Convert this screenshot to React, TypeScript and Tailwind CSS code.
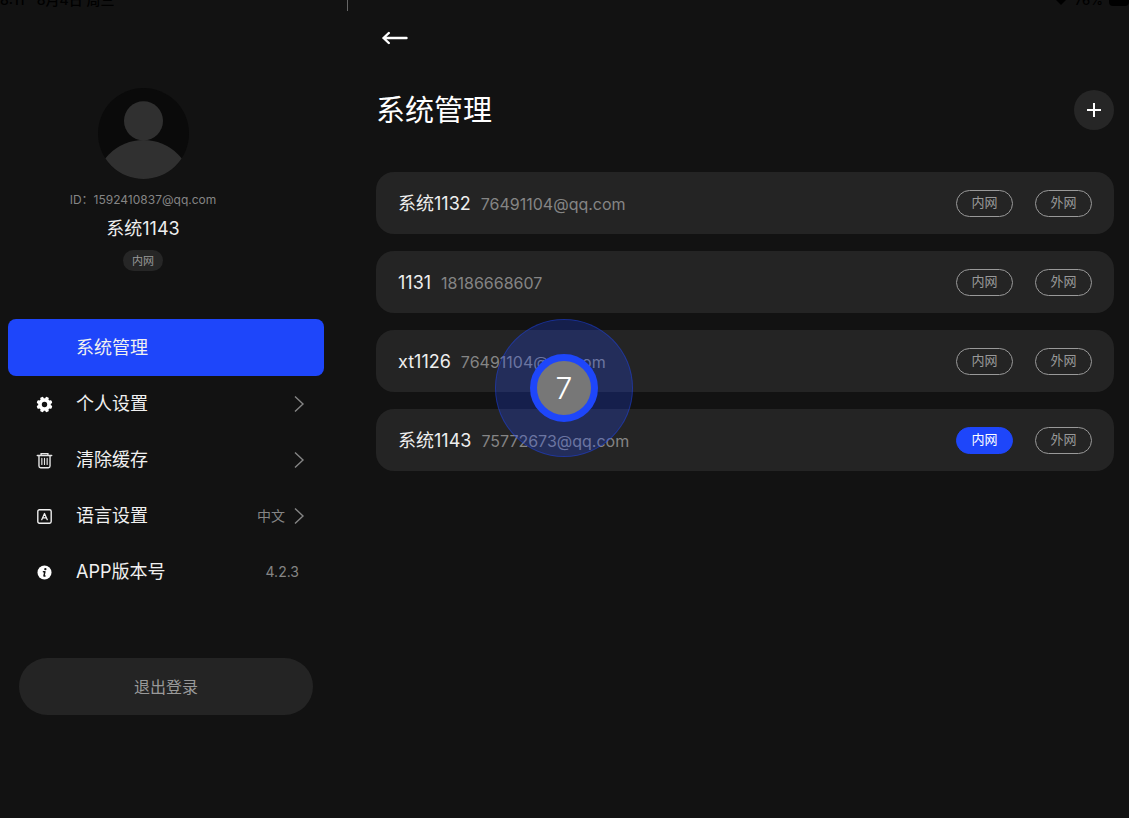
import React, { useState } from 'react';

type Network = 'inner' | 'outer';

interface Account {
  id: number;
  name: string;
  login: string;
  network: Network | null;
}

const ACCOUNTS: Account[] = [
  { id: 1, name: '系统1132', login: '76491104@qq.com', network: null },
  { id: 2, name: '1131', login: '18186668607', network: null },
  { id: 3, name: 'xt1126', login: '76491104@qq.com', network: null },
  { id: 4, name: '系统1143', login: '75772673@qq.com', network: 'inner' },
];

const GearIcon = () => (
  <svg width="17" height="17" viewBox="0 0 17 17" aria-hidden="true">
    <g fill="#fff" transform="translate(8.5 8.5)">
      <circle r="6.3" />
      {[22.5, 67.5, 112.5, 157.5].map((angle) => (
        <rect key={angle} x="-1.7" y="-7.9" width="3.4" height="15.8" rx="1" transform={`rotate(${angle})`} />
      ))}
      <circle r="2.7" fill="#121212" />
    </g>
  </svg>
);

const TrashIcon = () => (
  <svg width="17" height="17" viewBox="0 0 16 16" fill="none" stroke="#e6e6e6" strokeLinecap="round" aria-hidden="true">
    <path strokeWidth="1.3" d="M1.2 3.3h13.6M4.8 3V1.5h6.4V3" />
    <path strokeWidth="1.3" strokeLinejoin="round" d="M2.8 3.5v9.7c0 1 .6 1.6 1.6 1.6h7.2c1 0 1.6-.6 1.6-1.6V3.5" />
    <path strokeWidth="1.1" d="M5.5 6v5.8M8 6v5.8M10.500 6v5.800" />
  </svg>
);

const LanguageIcon = () => (
  <svg width="17" height="17" viewBox="0 0 16 16" fill="none" stroke="#f0f0f0" strokeLinecap="round" strokeLinejoin="round" aria-hidden="true">
    <rect x="1.7" y="1.7" width="12.6" height="12.6" rx="1.5" strokeWidth="1.3" />
    <path strokeWidth="1.2" d="M5.400 11 8 5.200l2.600 5.800M6.300 9.300h3.400" />
  </svg>
);

const InfoIcon = () => (
  <svg width="17" height="17" viewBox="0 0 16 16" aria-hidden="true">
    <circle cx="8" cy="8" r="6.6" fill="#fff" />
    <circle cx="8.8" cy="4.8" r="1.1" fill="#121212" />
    <path d="M7 7.200h1.400l-.9 4h1" fill="none" stroke="#121212" strokeWidth="1.400" strokeLinejoin="round" strokeLinecap="round" />
  </svg>
);

const Chevron = () => (
  <svg width="12" height="18" viewBox="0 0 12 18" fill="none" stroke="#858585" strokeWidth="1.4" aria-hidden="true">
    <path d="M2 1.500 10 9l-8 7.500" />
  </svg>
);

const Avatar = () => (
  <svg width="91" height="91" viewBox="0 0 90 90" role="img" aria-label="avatar">
    <defs>
      <clipPath id="avatar-clip">
        <circle cx="45" cy="45" r="45" />
      </clipPath>
    </defs>
    <g clipPath="url(#avatar-clip)">
      <rect width="90" height="90" fill="#0a0a0a" />
      <circle cx="45" cy="100" r="48.5" fill="#303030" />
      <circle cx="45" cy="32.5" r="19.300" fill="#303030" />
    </g>
  </svg>
);

const MENU = [
  { key: 'system', label: '系统管理', icon: null, value: '', arrow: false },
  { key: 'profile', label: '个人设置', icon: <GearIcon />, value: '', arrow: true },
  { key: 'cache', label: '清除缓存', icon: <TrashIcon />, value: '', arrow: true },
  { key: 'language', label: '语言设置', icon: <LanguageIcon />, value: '中文', arrow: true },
  { key: 'version', label: 'APP版本号', icon: <InfoIcon />, value: '4.2.3', arrow: false },
];

const StatusBar = () => (
  <div className="flex h-[11px] text-[13px] leading-4 font-medium text-black">
    <div className="flex w-[348px] shrink-0 border-r border-[#666]">
      <div className="flex h-2 items-end gap-3 overflow-hidden text-sm leading-4 whitespace-pre">
        <span>8:11</span>
        <span>8月4日 周三</span>
      </div>
    </div>
    <div className="flex h-2 flex-1 items-end justify-end overflow-hidden">
      <svg width="12" height="8" viewBox="0 0 12 8" aria-hidden="true">
        <path d="M1 0h10L6 5z" />
      </svg>
      <span className="mr-[6px] ml-2">76%</span>
      <span className="mb-[2px] h-[6px] w-5 rounded-b-sm bg-black" />
    </div>
  </div>
);

const Sidebar = () => {
  const [active, setActive] = useState('system');

  return (
    <aside className="w-[348px] shrink-0 pt-[77px] pr-6 pl-2">
      {/* Profile */}
      <div className="mr-[46px] flex flex-col items-center">
        <Avatar />
        <p className="mt-3 text-xs leading-[18px] text-[#858585]">ID：1592410837@qq.com</p>
        <p className="mt-2 text-lg leading-6 text-[#eee]">系统1143</p>
        <span className="mt-[9px] rounded-full bg-[#262626] px-[9px] pt-px text-[11px] leading-5 text-[#999]">内网</span>
      </div>

      {/* Menu */}
      <nav className="mt-12">
        {MENU.map((item) => (
          <button
            key={item.key}
            type="button"
            onClick={() => setActive(item.key)}
            className={`flex w-full items-center rounded-lg pr-[19px] pl-7 text-left ${
              active === item.key ? 'h-[57px] bg-[#1e46fa]' : 'h-14'
            }`}
          >
            <span className="flex w-10 shrink-0">{item.icon}</span>
            <span className="flex-1 text-lg text-[#f0f0f0]">{item.label}</span>
            <span className={`text-sm text-[#858585] ${item.arrow ? 'mr-2' : 'mr-[6px]'}`}>{item.value}</span>
            {item.arrow && <Chevron />}
          </button>
        ))}
      </nav>

      <div className="px-[11px] pt-[58px]">
        <button type="button" className="h-[57px] w-full rounded-full bg-[#242424] text-base text-[#999]">
          退出登录
        </button>
      </div>
    </aside>
  );
};

interface NetworkButtonProps {
  label: string;
  selected: boolean;
  onClick: () => void;
}

const NetworkButton: React.FC<NetworkButtonProps> = ({ label, selected, onClick }) => (
  <button
    type="button"
    aria-pressed={selected}
    onClick={onClick}
    className={`h-[27px] w-[57px] rounded-full border pb-px text-[13px] leading-none ${
      selected ? 'border-[#1e46fa] bg-[#1e46fa] text-white' : 'border-[#999] text-[#999]'
    }`}
  >
    {label}
  </button>
);

const TouchPoint = ({ value }: { value: number }) => (
  <div className="pointer-events-none absolute top-[308px] left-[147px] flex size-[138px] items-center justify-center rounded-full border border-[#1e46fa]/40 bg-[#1e46fa]/25">
    <div className="flex size-[68px] items-center justify-center rounded-full border-[7px] border-[#1e46fa] bg-[#777] text-[30px] leading-none font-light text-white">
      {value}
    </div>
  </div>
);

const SystemPage = () => {
  const [accounts, setAccounts] = useState(ACCOUNTS);

  const selectNetwork = (id: number, network: Network) => {
    setAccounts((list) => list.map((a) => ({ ...a, network: a.id === id ? network : null })));
  };

  return (
    <main className="relative min-w-0 flex-1 pt-[15px] pr-[15px] pl-7">
      <button type="button" aria-label="返回" className="flex h-6 w-10 items-center pl-[6px]">
        <svg width="27" height="14" viewBox="0 0 27 14" fill="none" stroke="#fff" strokeWidth="2.4" strokeLinecap="round" strokeLinejoin="round">
          <path d="M24.500 7H1.500M6.800 2 1.500 7l5.300 5" />
        </svg>
      </button>

      <div className="mt-[39px] flex items-center justify-between">
        <h1 className="pt-[2px] text-[29px] leading-10 text-white">系统管理</h1>
        <button type="button" aria-label="添加" className="flex size-10 items-center justify-center rounded-full bg-[#262626]">
          <svg width="14" height="14" viewBox="0 0 14 14" stroke="#fff" strokeWidth="2">
            <path d="M7 0v14M0 7h14" />
          </svg>
        </button>
      </div>

      <ul className="mt-[41px] flex flex-col gap-[17px]">
        {accounts.map((account) => (
          <li key={account.id} className="flex h-[62px] items-center gap-[22px] rounded-[18px] bg-[#242424] px-[22px]">
            <div className="flex flex-1 items-baseline gap-[10px] pt-px">
              <span className="text-lg text-[#eee]">{account.name}</span>
              <span className="text-base text-[#858585]">{account.login}</span>
            </div>
            <NetworkButton
              label="内网"
              selected={account.network === 'inner'}
              onClick={() => selectNetwork(account.id, 'inner')}
            />
            <NetworkButton
              label="外网"
              selected={account.network === 'outer'}
              onClick={() => selectNetwork(account.id, 'outer')}
            />
          </li>
        ))}
      </ul>

      <TouchPoint value={7} />
    </main>
  );
};

export default function App() {
  return (
    <div className="min-h-screen bg-[#121212] font-['Inter','Noto_Sans_CJK_SC',sans-serif]">
      <StatusBar />
      <div className="flex">
        <Sidebar />
        <SystemPage />
      </div>
    </div>
  );
}
